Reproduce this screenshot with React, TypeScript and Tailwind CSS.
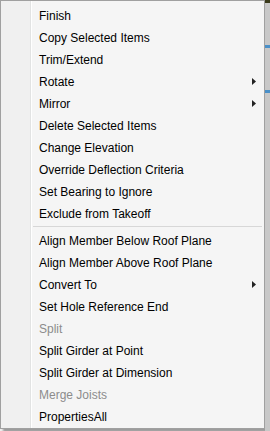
import React from "react";

type Item = { label: string; sub?: boolean; disabled?: boolean } | "sep";

const items: Item[] = [
  { label: "Finish" },
  { label: "Copy Selected Items" },
  { label: "Trim/Extend" },
  { label: "Rotate", sub: true },
  { label: "Mirror", sub: true },
  { label: "Delete Selected Items" },
  { label: "Change Elevation" },
  { label: "Override Deflection Criteria" },
  { label: "Set Bearing to Ignore" },
  { label: "Exclude from Takeoff" },
  "sep",
  { label: "Align Member Below Roof Plane" },
  { label: "Align Member Above Roof Plane" },
  { label: "Convert To", sub: true },
  { label: "Set Hole Reference End" },
  { label: "Split", disabled: true },
  { label: "Split Girder at Point" },
  { label: "Split Girder at Dimension" },
  { label: "Merge Joists", disabled: true },
  { label: "PropertiesAll" },
];

const Arrow = () => (
  <svg width="4" height="7" viewBox="0 0 4 7" className="block">
    <path d="M0 0 L4 3.5 L0 7 Z" fill="#222" />
  </svg>
);

const App = () => {
  return (
    <div className="w-[270px] h-[431px] bg-[#f0f0f0] flex overflow-hidden">
      <div className="flex flex-col">
        <div className="flex shadow-[3px_3px_2px_rgba(0,0,0,0.35)]">
          <div className="w-[265px] border border-[#a0a0a0] bg-[#f5f5f5] flex">
            <div className="w-[30px] bg-[#f0f0f0] border-r border-[#e2e3e3]" />
            <div className="w-px bg-white" />
            <div className="flex-1 pt-[3px] pb-px">
              {items.map((it, i) =>
                it === "sep" ? (
                  <div key={i} className="h-[5px] pt-[2px] pl-px pr-[2px]">
                    <div className="h-px bg-[#d7d7d7]" />
                  </div>
                ) : (
                  <div
                    key={i}
                    className={`h-[22px] flex items-center pt-px pl-[7px] pr-[8px] text-[12px] font-['Liberation_Sans',sans-serif] ${
                      it.disabled ? "text-[#8c8c8c]" : "text-black"
                    }`}
                  >
                    <span className="flex-1">{it.label}</span>
                    {it.sub && <Arrow />}
                  </div>
                )
              )}
            </div>
          </div>
        </div>
      </div>
      <div className="flex-1 flex flex-col bg-[#c8c8c8]">
        <div className="h-[3px] bg-[#3a3a1a]" />
        <div className="h-[42px]" />
        <div className="h-[3px] bg-[#4a90c8]" />
        <div className="h-[42px]" />
        <div className="h-[3px] bg-[#4a90c8]" />
      </div>
    </div>
  );
};

export default App;
